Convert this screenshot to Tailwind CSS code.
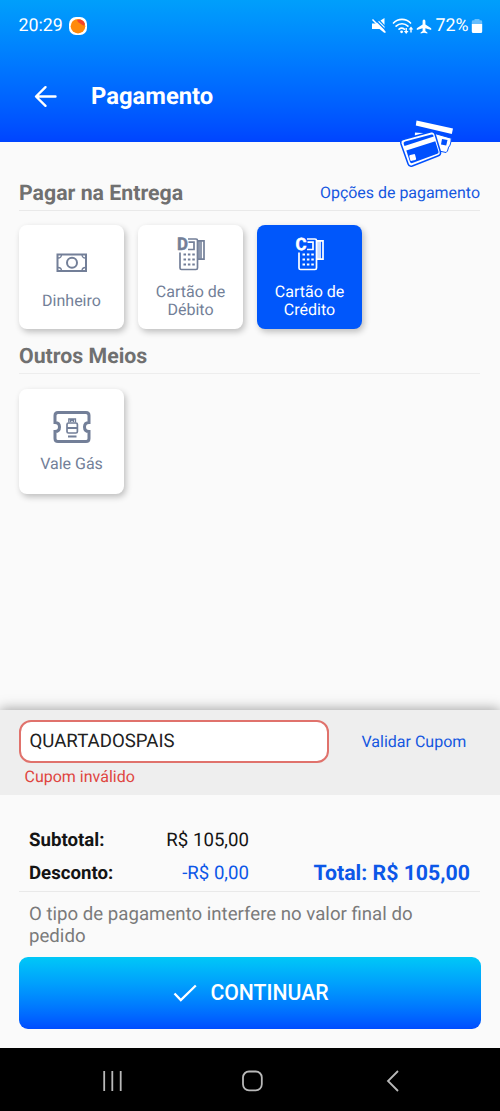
<!DOCTYPE html>
<html lang="pt-BR">
<head>
<meta charset="utf-8">
<title>Pagamento</title>
<script src="https://cdn.jsdelivr.net/npm/@tailwindcss/browser@4"></script>
</head>
<body class="w-[500px] h-[1111px] overflow-hidden bg-[#fafafa] font-['Roboto','Liberation_Sans',sans-serif] [text-rendering:geometricPrecision] flex flex-col">
<header class="relative h-[141.500px] shrink-0 bg-linear-to-b from-[#009ffb] via-[#0074ff] via-50% to-[#0044ff] text-white">
  <div class="flex items-center h-[51px] pl-[18.500px] pr-[17.500px]">
    <span class="pt-[2px] text-[17.800px]">20:29</span>
    <svg class="ml-[6px]" width="18" height="18" viewBox="0 0 18 18"><rect width="18" height="18" rx="7" fill="#fff"/><circle cx="9" cy="9.200" r="7.300" fill="#ff8a0c"/><path d="M8 3.500C10 1.500 14 2.500 15.600 6c.4 1 .2 2.300-.8 2.800L9.500 5.500Z" fill="#f4442c"/></svg>
    <div class="ml-auto flex items-center">
      <svg width="62" height="20" viewBox="-1 0 62 20" fill="#fff">
        <path d="M1 7.500h4L8 5l5.500 5.500v6.500L8.500 13H5L1 13z"/><path d="M9.500 4.500L13.500 2v7z"/><path d="M1.500 3.500L14.500 16.500" stroke="#fff" stroke-width="1.500"/><path d="M3.500 3L15.500 15" stroke="#0086ff" stroke-width="1.300"/>
        <g fill="none" stroke="#fff" stroke-width="1.700" stroke-linecap="round"><path d="M22.500 7a12 12 0 0 1 17 0M25.100 10.200a8.300 8.300 0 0 1 11.800 0M28.100 13.100a4.200 4.200 0 0 1 5.200 0"/></g>
        <circle cx="30.600" cy="15.800" r="1.400"/>
        <path d="M34.500 12h1.400v3h1.600l-2.300 3-2.300-3h1.600zM39.300 16.500h1.400v-3h1.600L40 10.500l-2.300 3h1.600z"/>
        <path d="M53 3.500c.9 0 1.400.8 1.400 1.900v3.200l5.800 3.600v1.800l-5.800-1.700v2.600l2 1.500v1.200L53 16.800l-3.400.8v-1.200l2-1.500v-2.600L45.800 14v-1.800l5.800-3.600V5.400c0-1.100.5-1.900 1.400-1.900z"/>
      </svg>
      <span class="ml-[3.500px] pt-[2px] text-[17.800px]">72%</span>
      <svg class="ml-[2px]" width="12" height="16" viewBox="0 0 12 16"><path d="M3.500 1h5v1.300H10A1.500 1.500 0 0 1 11.200 4v2H.8V4A1.500 1.500 0 0 1 2 2.300h1.500z" fill="#fff" opacity=".4"/><path d="M.8 6h10.400v7.500a1.500 1.500 0 0 1-1.500 1.500H2.300A1.500 1.500 0 0 1 .8 13.500z" fill="#fff"/></svg>
    </div>
  </div>
  <div class="flex items-center h-[90px] pl-[34px]">
    <svg width="24" height="24" viewBox="0 0 24 24" fill="none" stroke="#fff" stroke-width="2.400" stroke-linecap="round" stroke-linejoin="round"><path d="M21.500 12.500H2.500M11.500 3.200L2 12.500l9.500 9.300"/></svg>
    <h1 class="ml-[33px] pt-[2px] text-[23.800px] font-bold">Pagamento</h1>
  </div>
  <svg class="absolute left-[398px] top-[118px]" width="58" height="52" viewBox="0 0 58 52">
    <path d="M18.500 2.500L55 10.500l-1.200 5.500L17.800 7.500z" fill="#fff"/>
    <path d="M16.500 14L35 15l18.200 5.200q-.2 7-2.600 9-1 5-2.500 5.300L41 33l-25-11z" fill="#fff" stroke="#0050fd" stroke-width="1"/>
    <path d="M44 21l5.500 1-1.300 5.500-5.200-1z" fill="#0050fd"/>
    <path d="M5 21.500L33 13.800q3-.8 4 2.200l5.400 17.700q.8 3-2 4L14.300 48q-3.200 1-4.200-2L3 26q-1-3.700 2-4.500z" fill="#fff" stroke="#0050fd" stroke-width="1.500"/>
    <path d="M5.700 26q-.6-1.900 1.300-2.500L33.500 16.500q1.500-.3 2 1.300l.2.700L6.500 28z M8.300 32.500L37.300 23.300l3.200 10.200q.4 1.700-1.200 2.200L14.300 45q-1.700.5-2.300-1z" fill="#0050fd"/>
    <rect x="11.700" y="36.500" width="6" height="6" rx="1.200" transform="rotate(-15 14.700 39.500)" fill="#fff"/>
  </svg>
</header>

<main class="h-[568.500px] shrink-0 pl-[19px] pr-[20px] pt-[33.500px]">
  <div class="flex items-center justify-between h-[36px] border-b border-[#e9e9e9] text-[#707070]">
    <h2 class="pt-[3px] text-[21.300px] font-bold">Pagar na Entrega</h2>
    <a class="text-[15.950px] text-[#1557e0]">Opções de pagamento</a>
  </div>
  <div class="mt-[14px] flex gap-[14px] text-[16px] leading-[18px] text-center text-[#737f98]">
    <div class="w-[105px] h-[104px] rounded-[8px] bg-white shadow-[2px_3px_6px_rgba(0,0,0,.24)] flex flex-col items-center">
      <svg class="mt-[28px]" width="32" height="20" viewBox="0 0 32 20" fill="none" stroke="#737f98" stroke-width="2"><rect x="1.500" y="1.500" width="28.500" height="16.500"/><circle cx="16" cy="9.700" r="5"/><path d="M2 5q3.500 0 3.500-3.500M2 14.500q3.500 0 3.500 3.500M29.500 5q-3.500 0-3.500-3.500M29.500 14.500q-3.500 0-3.500 3.500" stroke-width="1.300"/></svg>
      <span class="mt-[18.500px]">Dinheiro</span>
    </div>
    <div class="w-[105px] h-[104px] rounded-[8px] bg-white shadow-[2px_3px_6px_rgba(0,0,0,.24)] flex flex-col items-center">
      <svg class="mt-[8px]" width="30" height="38" viewBox="0 -4 30 38"><g fill="none" stroke="#737f98" stroke-width="1.700"><path d="M4 15.500V31q0 1.500 1.500 1.500H20q1.500 0 1.500-1.500V3.500q0-1.500-1.500-1.500H12"/><path d="M12.500 5.200H18v7.300h-6"/><path d="M22 3.800h6v18.400h-6"/></g><path d="M21.800 3.500h4.200v19h-4.200z" fill="#737f98" opacity=".8"/><path d="M7.500 17.500h11.300M7.500 22.500h11.300M7.500 27.500h11.300" stroke="#737f98" stroke-width="1.900" stroke-dasharray="2.500 1.900"/><text x="1" y="13.300" font-size="17.500" font-weight="700" fill="#737f98" stroke="#737f98" stroke-width=".5" textLength="11" lengthAdjust="spacingAndGlyphs">D</text></svg>
      <span class="mt-[11.500px]">Cartão de<br>Débito</span>
    </div>
    <div class="w-[105px] h-[104px] rounded-[8px] bg-[#0057fb] text-white shadow-[2px_3px_6px_rgba(0,0,0,.24)] flex flex-col items-center">
      <svg class="mt-[8px]" width="30" height="38" viewBox="0 -4 30 38"><g fill="none" stroke="#fff" stroke-width="1.700"><path d="M4 15.500V31q0 1.500 1.500 1.500H20q1.500 0 1.500-1.500V3.500q0-1.500-1.500-1.500H12"/><path d="M12.500 5.200H18v7.300h-6"/><path d="M22 3.800h6v18.400h-6"/></g><path d="M21.800 3.500h4.200v19h-4.200z" fill="#fff" opacity=".8"/><path d="M7.500 17.500h11.300M7.500 22.500h11.300M7.500 27.500h11.300" stroke="#fff" stroke-width="1.900" stroke-dasharray="2.500 1.900"/><text x=".6" y="13.300" font-size="17" font-weight="700" fill="#fff" stroke="#fff" stroke-width=".5" textLength="11" lengthAdjust="spacingAndGlyphs">C</text></svg>
      <span class="mt-[11.500px]">Cartão de<br>Crédito</span>
    </div>
  </div>
  <div class="mt-[9px] flex items-center h-[36px] border-b border-[#ededed]">
    <h2 class="pt-[3px] text-[21.300px] font-bold text-[#707070]">Outros Meios</h2>
  </div>
  <div class="mt-[14.500px] w-[105px] h-[105px] rounded-[8px] bg-white shadow-[2px_3px_6px_rgba(0,0,0,.24)] flex flex-col items-center text-[16px] leading-[18px] text-[#737f98]">
    <svg class="mt-[21px]" width="38" height="34" viewBox="0 0 38 34" fill="none" stroke="#737f98"><path d="M5 2.500h28q3 0 3 3v7q-4.500 0-4.500 4.500t4.500 4.500v7q0 3-3 3H5q-3 0-3-3v-7q4.500 0 4.500-4.500T2 12.500v-7q0-3 3-3z" stroke-width="3"/><path d="M15.800 12.500V9h6.700v3.500M17.500 12V10.500h3V12" stroke-width="1.300"/><rect x="14" y="13" width="10.400" height="10" rx="1.500" stroke-width="1.700"/><path d="M14 18h10M15 26.500h8.500" stroke-width="1.800"/></svg>
    <span class="mt-[11.500px]">Vale Gás</span>
  </div>
</main>

<section class="h-[85px] shrink-0 bg-[#eeeeee] shadow-[0_-1px_12px_rgba(0,0,0,.36)] px-[19px] pt-[10px]">
  <div class="flex items-center">
    <div class="w-[310px] h-[43px] rounded-[12px] border-2 border-[#e0726c] bg-white pl-[8.500px] flex items-center text-[18.650px] text-[#212121] pt-[1px]">QUARTADOSPAIS</div>
    <a class="ml-[32.500px] text-[16px] text-[#1557e0] whitespace-nowrap">Validar Cupom</a>
  </div>
  <p class="ml-[5.500px] mt-[4px] text-[16px] leading-[20px] text-[#df4540]">Cupom inválido</p>
</section>

<section class="relative h-[253px] shrink-0 bg-[#fafafa] pl-[19px] pr-[20px] pt-[28px]">
  <div class="flex items-end border-b border-[#e9e9e9] h-[69px] px-[10px] pb-px">
    <div class="w-[220px] text-[18.650px] text-[#141414]">
      <div class="flex justify-between h-[33px] items-center"><b>Subtotal:</b><span>R$ 105,00</span></div>
      <div class="flex justify-between h-[33px] items-center"><b>Desconto:</b><span class="text-[#0c57e8]">-R$ 0,00</span></div>
    </div>
    <strong class="ml-auto leading-[33px] text-[21.300px] text-[#0c57e8]">Total: R$ 105,00</strong>
  </div>
  <p class="pl-[10px] mt-[11px] text-[18.650px] leading-[22px] text-[#7a7a7a] w-[420px]">O tipo de pagamento interfere no valor final do pedido</p>
  <button class="mt-[10px] w-[462px] h-[72px] rounded-[9px] bg-linear-to-b from-[#00c8f7] to-[#004cff] text-white flex items-center justify-center gap-[13px] pl-[2px]">
    <svg width="24" height="20" viewBox="0 0 24 20" fill="none" stroke="#fff" stroke-width="2.300"><path d="M1.500 10.500l6.300 6.500L22.800 2.500"/></svg>
    <span class="text-[21.200px] font-medium">CONTINUAR</span>
  </button>
</section>

<nav class="flex-1 bg-black">
  <svg width="500" height="63" viewBox="0 0 500 63" fill="none" stroke="#b9b9b9" stroke-width="1.800"><path d="M104.200 23v20M112.300 23v20M120.700 23v20"/><rect x="243" y="23.500" width="18.800" height="18.800" rx="6"/><path d="M398 23L388 33l10 10"/></svg>
</nav>
</body>
</html>
